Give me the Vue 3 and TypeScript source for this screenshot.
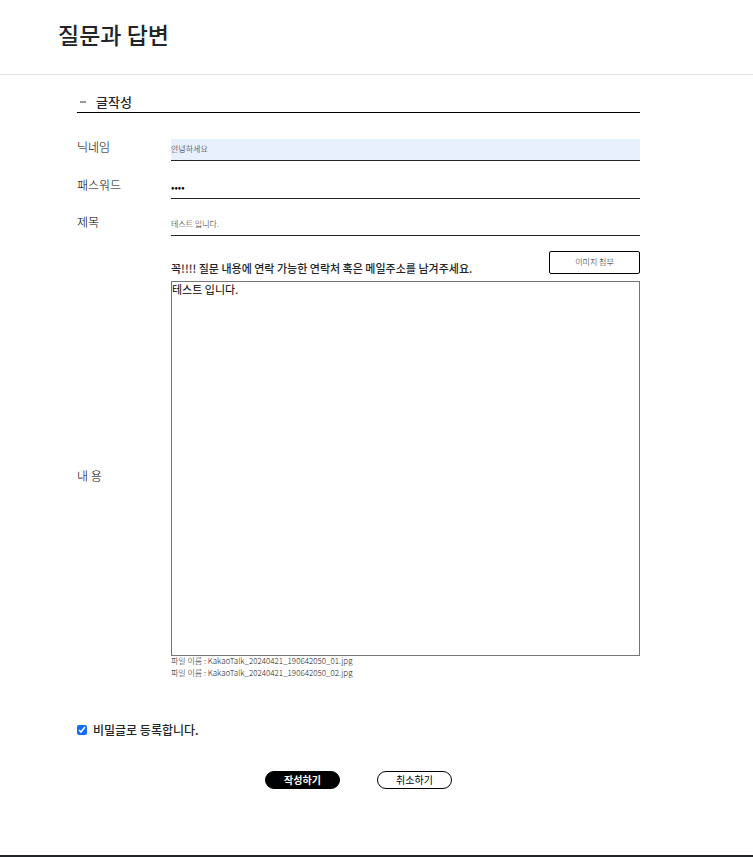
<script setup lang="ts">
import { ref } from 'vue'

const nickname = ref<string>('안녕하세요')
const password = ref<string>('1234')
const subject = ref<string>('테스트 입니다.')
const content = ref<string>('테스트 입니다.')
const secret = ref<boolean>(true)
const files = ref<string[]>([
  'KakaoTalk_20240421_190642050_01.jpg',
  'KakaoTalk_20240421_190642050_02.jpg',
])
</script>

<template>
  <div class="page">
    <header class="page-header">
      <h1>질문과 답변</h1>
    </header>

    <main class="content">
      <h2 class="section-title"><span class="dash" aria-hidden="true"></span>글작성</h2>

      <form @submit.prevent>
        <div class="row first-row">
          <label for="nickname">닉네임</label>
          <input id="nickname" v-model="nickname" class="field filled" type="text" />
        </div>
        <div class="row">
          <label for="password">패스워드</label>
          <input id="password" v-model="password" class="field secret-field" type="password" />
        </div>
        <div class="row">
          <label for="subject">제목</label>
          <input id="subject" v-model="subject" class="field" type="text" />
        </div>

        <div class="row body-row">
          <label for="content">내 용</label>
          <div class="editor">
            <div class="editor-head">
              <p class="notice">꼭!!!! 질문 내용에 연락 가능한 연락처 혹은 메일주소를 남겨주세요.</p>
              <button type="button" class="attach">이미지 첨부</button>
            </div>
            <textarea id="content" v-model="content" spellcheck="false"></textarea>
            <ul class="files">
              <li v-for="file in files" :key="file">파일 이름 : {{ file }}</li>
            </ul>
          </div>
        </div>

        <div class="secret">
          <input id="secret" v-model="secret" type="checkbox" />
          <label for="secret">비밀글로 등록합니다.</label>
        </div>

        <div class="actions">
          <button type="submit" class="pill primary">작성하기</button>
          <button type="button" class="pill">취소하기</button>
        </div>
      </form>
    </main>

    <footer class="page-footer"></footer>
  </div>
</template>

<style>
body {
  background: #fff;
}
</style>

<style scoped>
.page {
  font-family: "Noto Sans CJK KR", sans-serif;
  font-size: 12px;
  color: #212529;
}

.page *,
.page {
  box-sizing: border-box;
}

h1,
h2,
p,
ul {
  margin: 0;
  padding: 0;
}

button,
input,
textarea {
  font-family: inherit;
  margin: 0;
}

.page-header {
  padding: 17px 58px 23px;
  border-bottom: 1px solid #dee2e6;
}

h1 {
  font-size: 23px;
  font-weight: 500;
  line-height: 34px;
}

.content {
  padding: 18px 113px 0 77px;
}

.section-title {
  display: flex;
  align-items: center;
  gap: 10px;
  padding: 0 0 2px 3px;
  border-bottom: 1px solid #000;
  font-size: 13px;
  font-weight: 500;
  line-height: 17px;
}

.dash {
  width: 6px;
  height: 2px;
  background: #999;
}

form {
  padding-top: 26px;
}

.row {
  display: grid;
  grid-template-columns: 94px minmax(0, 1fr);
  margin-bottom: 15px;
  color: #000;
  font-weight: 300;
  line-height: 16px;
}

.first-row {
  margin-bottom: 16px;
}

.field {
  width: 100%;
  height: 22px;
  padding: 0 0 2px;
  border: 0;
  border-bottom: 1px solid #212529;
  border-radius: 0;
  outline: 0;
  background: #fff;
  color: #222;
  font-size: 8px;
  font-weight: 300;
}

.filled {
  background: #e8f0fe;
}

.secret-field {
  color: #000;
  font-size: 10px;
  font-weight: 400;
}

.body-row {
  align-items: center;
  margin-bottom: 0;
}

.editor-head {
  display: flex;
  justify-content: space-between;
  height: 30px;
}

.notice {
  padding-top: 9px;
  color: #212529;
  font-size: 11px;
  font-weight: 500;
}

.attach {
  flex: none;
  width: 91px;
  height: 23px;
  padding: 0 0 2px;
  border: 1px solid #000;
  border-radius: 2px;
  background: #fff;
  color: #222;
  font-size: 8px;
  font-weight: 300;
}

textarea {
  display: block;
  width: 100%;
  height: 375px;
  padding: 0;
  border: 1px solid #767676;
  border-radius: 0;
  outline: 0;
  background: #fff;
  color: #000;
  font-size: 11px;
  font-weight: 400;
  line-height: 15px;
  resize: none;
}

.files {
  padding-bottom: 20px;
  list-style: none;
  color: #222;
  font-size: 8px;
  line-height: 9px;
}

.files li {
  height: 12px;
}

.secret {
  display: flex;
  align-items: center;
  gap: 6px;
  margin-top: 21px;
  font-weight: 500;
  line-height: 18px;
}

.secret input {
  width: 10px;
  height: 10px;
  accent-color: #0d6efd;
}

.actions {
  display: flex;
  justify-content: center;
  gap: 37px;
  padding-top: 32px;
}

.pill {
  width: 75px;
  height: 18px;
  padding: 0;
  border: 1px solid #000;
  border-radius: 9px;
  background: #fff;
  color: #000;
  font-size: 10px;
  font-weight: 400;
  line-height: 14px;
}

.primary {
  background: #000;
  color: #fff;
  font-weight: 700;
}

.page-footer {
  margin-top: 66px;
  border-top: 2px solid #212529;
}
</style>
